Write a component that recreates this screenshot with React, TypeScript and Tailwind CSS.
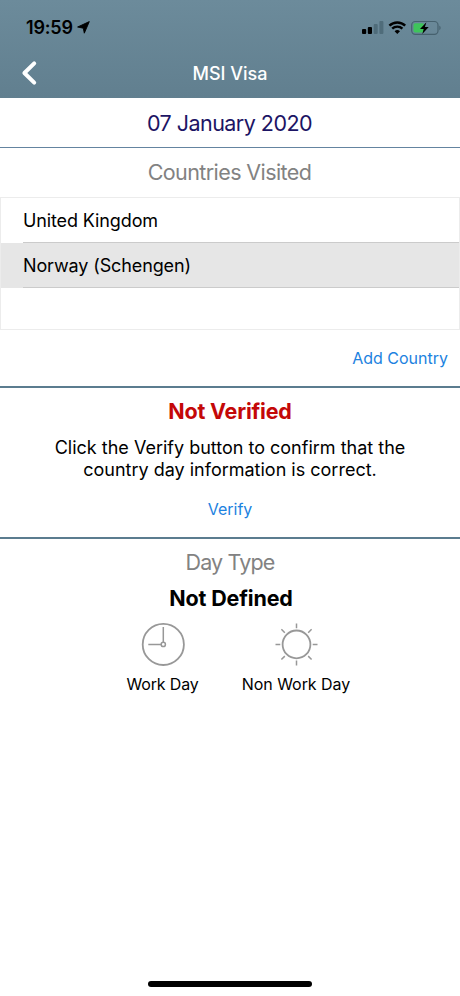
import React, { useState } from 'react';

const countries = ['United Kingdom', 'Norway (Schengen)'];

function StatusBar() {
  return (
    <div className="flex h-[54px] justify-between">
      <div className="flex pl-[26px] pt-[16px]">
        <span className="text-[18px] leading-[24px] font-semibold tracking-[-0.2px]">19:59</span>
        <svg className="ml-[4px] mt-[5px]" width="13" height="13" viewBox="0 0 13 13" fill="currentColor">
          <path d="M12.3.6 7.3 12.2 6.3 7.2.6 6z" stroke="currentColor" strokeWidth=".9" strokeLinejoin="round" />
        </svg>
      </div>
      <svg className="mt-[18px] mr-[18px]" width="82" height="20" viewBox="0 0 82 20">
        <rect x="2" y="11" width="4.2" height="5" rx="1" />
        <rect x="7.8" y="9" width="4.2" height="7" rx="1" />
        <g fill="#4f6c7a">
          <rect x="13.7" y="6" width="4" height="10" rx="1" />
          <rect x="19.4" y="3" width="4" height="13" rx="1" />
        </g>
        <g fill="none" stroke="#000" strokeWidth="2.4">
          <path d="M29.4 7.7a11.2 11.2 0 0 1 15.8 0" />
          <path d="M32.2 10.7a7.2 7.2 0 0 1 10.2 0" />
        </g>
        <path d="m37.3 16.1-2.7-2.8a3.9 3.9 0 0 1 5.4 0z" />
        <rect x="51.7" y="3.5" width="26.3" height="12.8" rx="3.6" fill="none" stroke="#46616e" strokeWidth="1.2" />
        <path d="M79.3 7.5c1.8.8 1.8 4 0 4.8z" fill="#46616e" />
        <rect x="53.5" y="5.2" width="10.5" height="9.4" rx="1.8" fill="#3ec45b" />
        <path d="m66.4 4.2-6.4 6.8h3.7l-1.4 5 6.4-6.9h-3.8z" />
      </svg>
    </div>
  );
}

function ClockIcon() {
  return (
    <svg width="44" height="44" viewBox="0 0 44 44" fill="none" stroke="#989898" strokeWidth="1.8">
      <circle cx="22.3" cy="22.4" r="20.6" />
      <circle cx="22.3" cy="22.4" r="2.1" strokeWidth="1.5" />
      <path d="M22.3 5v15.4M7.3 22.4h12.9" strokeWidth="1.5" />
    </svg>
  );
}

function SunIcon() {
  return (
    <svg width="44" height="44" viewBox="0 0 44 44" fill="none" stroke="#989898" strokeWidth="1.5">
      <circle cx="22.5" cy="22.4" r="13.9" strokeWidth="1.8" />
      <path d="M22.5 1.4v4.8M22.5 38.6v4.8M1.5 22.4h4.8M38.7 22.4h4.8M7.4 7.3l3.4 3.4M34.2 34.1l3.4 3.4M37.6 7.3l-3.4 3.4M10.8 34.1l-3.4 3.4" />
    </svg>
  );
}

export default function App() {
  const [selected, setSelected] = useState('Norway (Schengen)');

  return (
    <div className="flex h-[996px] w-[460px] flex-col overflow-hidden bg-white font-['Inter',sans-serif] text-black">
      <header className="h-[98px] shrink-0 bg-gradient-to-b from-[#6c8b9b] to-[#617f8f]">
        <StatusBar />
        <div className="grid grid-cols-[60px_1fr_60px]">
          <button type="button" aria-label="Back" className="flex h-[40px] items-center pl-[20px]">
            <svg className="-mt-[2px]" width="18" height="26" viewBox="0 0 18 26" fill="none" stroke="#fff" strokeWidth="4" strokeLinecap="round" strokeLinejoin="round">
              <path d="M14.2 3.3 4.4 13l9.8 9.7" />
            </svg>
          </button>
          <h1 className="text-center text-[18px] leading-[40px] font-medium text-white">MSI Visa</h1>
        </div>
      </header>

      <div className="h-[50px] shrink-0 border-b-[1.5px] border-[#6484a0] pr-px text-center text-[21.5px] leading-[50px] tracking-[-0.53px] text-[#1c1464]">
        07 January 2020
      </div>

      <section className="h-[240px] shrink-0 border-b-2 border-[#5b7c8f]">
        <h2 className="h-[49px] pr-px text-center text-[21.5px] leading-[49px] tracking-[-0.6px] text-[#828282]">Countries Visited</h2>
        <ul className="h-[133px] border border-[#ececec]">
          {countries.map((name) => (
            <li
              key={name}
              onClick={() => setSelected(name)}
              className={`pl-[22px] ${name === selected ? 'bg-[#e6e6e6]' : 'bg-white'}`}
            >
              <div className="h-[45px] border-b border-[#cbcbcb] text-[18px] leading-[46px] tracking-[-0.12px]">{name}</div>
            </li>
          ))}
        </ul>
        <div className="flex justify-end pr-[12px]">
          <button type="button" className="text-[16px] leading-[56px] text-[#1c82e0]">Add Country</button>
        </div>
      </section>

      <section className="flex h-[151px] shrink-0 flex-col items-center border-b-2 border-[#5b7c8f]">
        <h2 className="mt-[7px] text-[21.5px] leading-[32px] font-bold tracking-[-0.2px] text-[#c40808]">Not Verified</h2>
        <p className="mt-[10px] text-center text-[18px] leading-[22px]">
          Click the Verify button to confirm that the<br />country day information is correct.
        </p>
        <button type="button" className="mt-[16px] text-[16px] leading-[24px] text-[#1c82e0]">Verify</button>
      </section>

      <section className="flex flex-1 flex-col items-center">
        <h2 className="mt-[7px] text-[21.5px] leading-[32px] tracking-[-0.85px] text-[#828282]">Day Type</h2>
        <p className="mt-[4px] pl-[2px] text-[21.5px] leading-[32px] font-bold tracking-[-0.15px]">Not Defined</p>
        <div className="mt-[8px] flex w-[266px] justify-between">
          <button type="button" className="flex w-[132px] flex-col items-center">
            <ClockIcon />
            <span className="mt-[6px] pr-px text-[16px] leading-[24px] tracking-[-0.15px]">Work Day</span>
          </button>
          <button type="button" className="flex w-[134px] flex-col items-center">
            <SunIcon />
            <span className="mt-[6px] text-[16px] leading-[24px] tracking-[-0.05px]">Non Work Day</span>
          </button>
        </div>
      </section>

      <div className="mx-auto mb-[9px] h-[6px] w-[164px] shrink-0 rounded-full bg-black" />
    </div>
  );
}
